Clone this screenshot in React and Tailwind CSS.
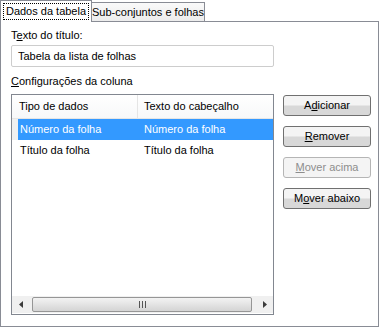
import React from 'react';

const Btn = ({ children, disabled }) => (
  <button
    disabled={disabled}
    className={
      disabled
        ? 'h-[21px] w-[88px] rounded-[3px] border border-[#b5b5b5] bg-[#f4f4f4] text-[#8d8d8d] flex items-center justify-center'
        : 'h-[21px] w-[88px] rounded-[3px] border border-[#707070] bg-gradient-to-b from-[#f4f4f4] from-45% to-[#d8d8d8] to-55% text-black flex items-center justify-center'
    }
  >
    {children}
  </button>
);

const rows = [
  { tipo: 'Número da folha', texto: 'Número da folha', selected: true },
  { tipo: 'Título da folha', texto: 'Título da folha' },
];

export default function App() {
  return (
    <div className="w-[381px] h-[328px] bg-white text-[11px] leading-[13px] text-black font-['Liberation_Sans',Arial,sans-serif]">
      {/* tabs */}
      <div className="flex items-end h-[21px]">
        <div className="relative z-10 -mb-px h-[22px] w-[92px] border border-b-0 border-[#898c95] bg-white px-[2px] pt-[2px]">
          <div className="h-[17px] border border-dotted border-black flex items-center justify-center">
            Dados da tabela
          </div>
        </div>
        <div className="h-[19px] w-[113px] border border-b-0 border-l-0 border-[#898c95] bg-gradient-to-b from-[#fafafa] to-[#ececec] flex items-center justify-center">
          Sub-conjuntos e folhas
        </div>
      </div>

      {/* panel */}
      <div className="w-[379px] h-[306px] border border-[#898c95] pl-[10px] pt-[7px]">
        <div>
          T<span className="underline">e</span>xto do título:
        </div>
        <div className="mt-[3px] h-[22px] w-[263px] border border-[#cdcdcd] rounded-[2px] flex items-center pl-[6px]">
          Tabela da lista de folhas
        </div>
        <div className="mt-[8px]">
          <span className="underline">C</span>onfigurações da coluna
        </div>

        <div className="mt-[6px] flex">
          {/* list view */}
          <div className="w-[263px] h-[221px] border border-[#828790] flex flex-col">
            <div className="h-[24px] flex border-b border-[#e5e5e5] bg-gradient-to-b from-white to-[#f7f8f9]">
              <div className="w-[126px] border-r border-[#e5e5e5] flex items-center pl-[7px]">Tipo de dados</div>
              <div className="flex-1 flex items-center pl-[6px]">Texto do cabeçalho</div>
            </div>
            <div className="flex-1">
              {rows.map((r) => (
                <div key={r.tipo} className="h-[21px] flex">
                  <div className={r.selected ? 'w-[6px] bg-[#f0f0f0]' : 'w-[6px]'} />
                  <div
                    className={
                      r.selected
                        ? 'flex-1 flex items-center bg-[#3399ff] text-white'
                        : 'flex-1 flex items-center'
                    }
                  >
                    <div className="w-[120px] pl-[2px]">{r.tipo}</div>
                    <div className="pl-[6px]">{r.texto}</div>
                  </div>
                </div>
              ))}
            </div>
            {/* horizontal scrollbar */}
            <div className="h-[17px] mb-px flex items-center bg-[#f0f0f0]">
              <div className="w-[17px] h-[17px] flex items-center justify-center">
                <svg width="4" height="7" viewBox="0 0 4 7">
                  <path d="M4 0 L0 3.5 L4 7 Z" fill="#3c3c3c" />
                </svg>
              </div>
              <div className="ml-[3px] w-[220px] h-[15px] rounded-[2px] border border-[#969696] bg-gradient-to-b from-[#f3f3f3] to-[#d4d4d4] flex items-center justify-center gap-[2px]">
                <div className="w-px h-[7px] bg-[#555]" />
                <div className="w-px h-[7px] bg-[#555]" />
                <div className="w-px h-[7px] bg-[#555]" />
              </div>
              <div className="ml-auto w-[17px] h-[17px] flex items-center justify-center">
                <svg width="4" height="7" viewBox="0 0 4 7">
                  <path d="M0 0 L4 3.5 L0 7 Z" fill="#3c3c3c" />
                </svg>
              </div>
            </div>
          </div>

          {/* buttons */}
          <div className="ml-[9px] mt-px flex flex-col gap-[10px]">
            <Btn>
              A<span className="underline">d</span>icionar
            </Btn>
            <Btn>
              <span className="underline">R</span>emover
            </Btn>
            <Btn disabled>
              <span className="underline">M</span>over acima
            </Btn>
            <Btn>
              M<span className="underline">o</span>ver abaixo
            </Btn>
          </div>
        </div>
      </div>
    </div>
  );
}
